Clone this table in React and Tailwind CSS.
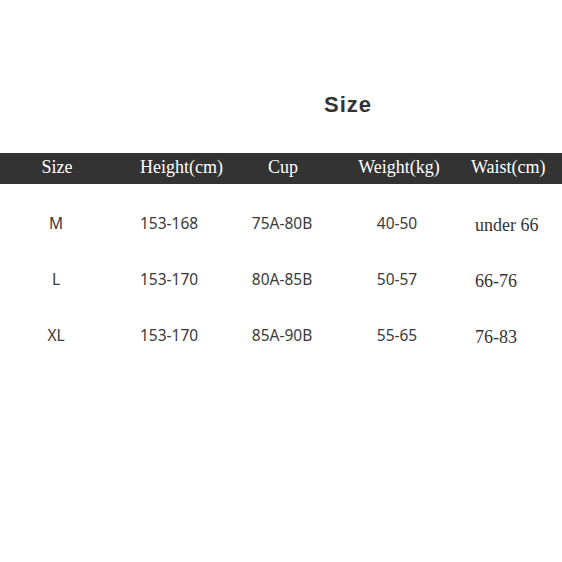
export default function App() {
  const rows = [
    ["M", "153-168", "75A-80B", "40-50", "under 66"],
    ["L", "153-170", "80A-85B", "50-57", "66-76"],
    ["XL", "153-170", "85A-90B", "55-65", "76-83"],
  ];
  const serif = { fontFamily: '"Liberation Serif", "Times New Roman", serif' };
  const sans = { fontFamily: '"Noto Sans", "Open Sans", sans-serif' };
  return (
    <div className="w-[562px] h-[562px] bg-white overflow-hidden">
      <div className="h-[153px] flex items-end justify-center pb-[37px] pl-[134px]">
        <div
          className="text-[22px] font-bold text-[#333] tracking-[1px] leading-none"
          style={{ fontFamily: '"Liberation Sans", Arial, sans-serif' }}
        >
          Size
        </div>
      </div>
      <div className="h-[31px] bg-[#333333] flex items-center pb-[3px] text-white text-[18px] leading-none" style={serif}>
        <div className="w-[114px] text-center">Size</div>
        <div className="w-[118px] pl-[26px]">Height(cm)</div>
        <div className="w-[102px] text-center">Cup</div>
        <div className="w-[130px] text-center">Weight(kg)</div>
        <div className="pl-[7px]">Waist(cm)</div>
      </div>
      <div className="pt-[12px]">
        {rows.map((r) => (
          <div key={r[0]} className="h-[56px] flex items-center text-[#3a3a3a]">
            <div className="w-[112px] text-center text-[15.5px]" style={sans}>{r[0]}</div>
            <div className="w-[120px] pl-[28px] text-[15.5px]" style={sans}>{r[1]}</div>
            <div className="w-[100px] text-center text-[15.5px]" style={sans}>{r[2]}</div>
            <div className="w-[130px] text-center text-[15.5px]" style={sans}>{r[3]}</div>
            <div className="pl-[13px] pt-[2px] text-[18px] text-[#333]" style={serif}>{r[4]}</div>
          </div>
        ))}
      </div>
    </div>
  );
}
